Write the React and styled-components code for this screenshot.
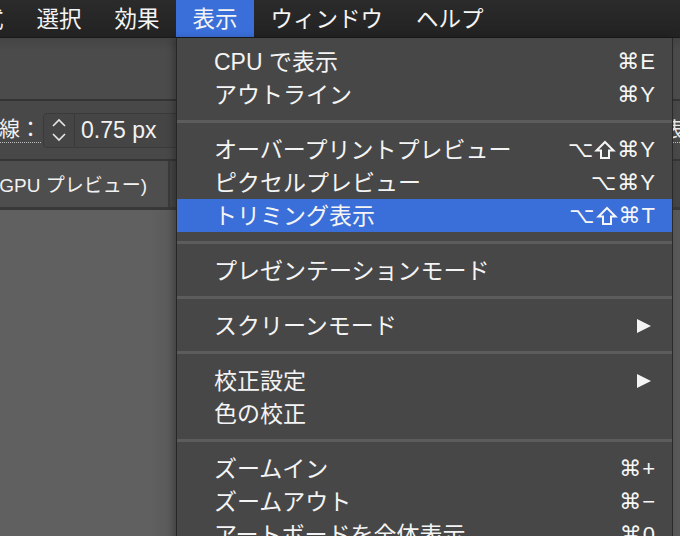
import React from "react";
import styled, { createGlobalStyle } from "styled-components";

const Global = createGlobalStyle`
  html, body {
    margin: 0;
    padding: 0;
    background: #5f5f5f;
    overflow: hidden;
  }
  body {
    font-family: "Liberation Sans", "Noto Sans CJK JP", sans-serif;
    color: #f2f2f2;
  }
`;

const Screen = styled.div`
  position: relative;
  width: 680px;
  height: 536px;
  overflow: hidden;
  display: flex;
  flex-direction: column;
`;

const MenuBar = styled.div`
  height: 38px;
  flex: none;
  display: flex;
  align-items: stretch;
  background: linear-gradient(#2b2b2b, #222222);
  border-bottom: 1px solid #1a1a1a;
  box-sizing: border-box;
  overflow: hidden;
`;

const BarItem = styled.div`
  display: flex;
  align-items: center;
  padding: 0 16.5px 3px;
  font-size: 22.5px;
  white-space: nowrap;
  color: #f4f4f4;
  background: ${(p) => (p.$active ? "#3a6ed8" : "transparent")};
  margin-left: ${(p) => p.$offset || 0}px;
`;

const Panel = styled.div`
  flex: none;
  background: #4a4a4a;
  display: flex;
  flex-direction: column;
`;

const PanelTop = styled.div`
  height: 61px;
  background: linear-gradient(#444444, #4b4b4b 20%);
  border-bottom: 2px solid #343434;
`;

const StrokeRow = styled.div`
  height: 60px;
  display: flex;
  align-items: center;
  box-sizing: border-box;
  background: #484848;
  border-bottom: 2px solid #353535;
`;

const Label = styled.span`
  font-size: 21px;
  margin-left: -1px;
  margin-right: 2px;
  padding-bottom: 1px;
  border-bottom: 1px dotted #bdbdbd;
  line-height: 24px;
`;

const Stepper = styled.div`
  width: 32px;
  height: 35px;
  display: flex;
  align-items: center;
  justify-content: center;
  background: #454545;
  border: 1px solid #3a3a3a;
  border-radius: 4px 0 0 4px;
  box-sizing: border-box;
`;

const ValueBox = styled.div`
  width: 120px;
  height: 35px;
  display: flex;
  align-items: center;
  padding-left: 6px;
  box-sizing: border-box;
  font-size: 23px;
  background: #454545;
  border: 1px solid #3a3a3a;
  border-left: none;
`;

const HiddenText = styled.span`
  margin-left: auto;
  margin-right: -26px;
  font-size: 21px;
  color: #e8e8e8;
  border-bottom: 1px dotted #bdbdbd;
  line-height: 24px;
`;

const TabRow = styled.div`
  height: 46px;
  display: flex;
  background: #444444;
  border-bottom: 3px solid #383838;
`;

const Tab = styled.div`
  width: 170px;
  display: flex;
  align-items: center;
  padding-bottom: 2px;
  box-sizing: border-box;
  font-size: 19px;
  background: #4e4e4e;
  border-right: 2px solid #3a3a3a;
  white-space: nowrap;
  overflow: hidden;
  text-indent: -7px;
`;

const Canvas = styled.div`
  flex: 1;
  background: linear-gradient(90deg, #606060 150px, #585858 176px);
`;

const Menu = styled.div`
  position: absolute;
  top: 38px;
  left: 176px;
  width: 497px;
  bottom: -40px;
  padding-top: 7px;
  box-sizing: border-box;
  background: #474747;
  border-left: 1px solid #262626;
  border-right: 1px solid #2a2a2a;
  box-shadow: -3px 0 6px rgba(0, 0, 0, 0.25);
  display: flex;
  flex-direction: column;
`;

const Row = styled.div`
  height: 33px;
  flex: none;
  display: flex;
  align-items: center;
  padding: 0 17px 0 37px;
  font-size: 23px;
  color: #f4f4f4;
  background: ${(p) => (p.$active ? "#3a6ed8" : "transparent")};
  white-space: nowrap;
`;

const Text = styled.span`
  padding-bottom: 4px;
`;

const Shortcut = styled.span`
  margin-left: auto;
  display: flex;
  align-items: center;
  gap: 1px;
  font-family: "Liberation Sans", "DejaVu Sans", sans-serif;
  font-size: 22px;
  color: #f6f6f6;
`;

const Separator = styled.div`
  height: 22px;
  flex: none;
  display: flex;
  flex-direction: column;
  justify-content: center;
  padding-bottom: 1px;
  box-sizing: border-box;
  &::after {
    content: "";
    height: 3px;
    background: #5c5c5c;
  }
`;

const Arrow = () => (
  <svg width="16" height="16" viewBox="0 0 16 16" style={{ marginLeft: "auto", marginRight: 3 }}>
    <polygon points="1,1 15,8 1,15" fill="#f4f4f4" />
  </svg>
);

const ShiftIcon = () => (
  <svg width="22" height="22" viewBox="0 0 22 22">
    <path
      d="M11 3 L19.5 11.5 H15 V19 H7 V11.5 H2.5 Z"
      fill="none"
      stroke="#f6f6f6"
      strokeWidth="2"
      strokeLinejoin="miter"
    />
  </svg>
);

const Keys = ({ value }) => (
  <Shortcut>
    {[...value].map((c, i) => (c === "⇧" ? <ShiftIcon key={i} /> : <span key={i}>{c}</span>))}
  </Shortcut>
);

const StepIcon = () => (
  <svg width="18" height="28" viewBox="0 0 18 28">
    <polyline points="3,10 9,4 15,10" fill="none" stroke="#e6e6e6" strokeWidth="1.6" />
    <polyline points="3,18 9,24 15,18" fill="none" stroke="#e6e6e6" strokeWidth="1.6" />
  </svg>
);

const items = [
  { label: "CPU で表示", key: "⌘E" },
  { label: "アウトライン", key: "⌘Y" },
  "sep",
  { label: "オーバープリントプレビュー", key: "⌥⇧⌘Y" },
  { label: "ピクセルプレビュー", key: "⌥⌘Y" },
  { label: "トリミング表示", key: "⌥⇧⌘T", active: true },
  "sep",
  { label: "プレゼンテーションモード" },
  "sep",
  { label: "スクリーンモード", sub: true },
  "sep",
  { label: "校正設定", sub: true },
  { label: "色の校正" },
  "sep",
  { label: "ズームイン", key: "⌘+" },
  { label: "ズームアウト", key: "⌘−" },
  { label: "アートボードを全体表示", key: "⌘0" },
];

export default function App() {
  return (
    <Screen>
      <Global />
      <MenuBar>
        <BarItem $offset={-58}>形式</BarItem>
        <BarItem>選択</BarItem>
        <BarItem>効果</BarItem>
        <BarItem $active>表示</BarItem>
        <BarItem>ウィンドウ</BarItem>
        <BarItem>ヘルプ</BarItem>
      </MenuBar>
      <Panel>
        <PanelTop />
        <StrokeRow>
          <Label>線：</Label>
          <Stepper>
            <StepIcon />
          </Stepper>
          <ValueBox>0.75 px</ValueBox>
          <HiddenText>非表示</HiddenText>
        </StrokeRow>
        <TabRow>
          <Tab>(GPU プレビュー)</Tab>
        </TabRow>
      </Panel>
      <Canvas />
      <Menu>
        {items.map((it, i) =>
          it === "sep" ? (
            <Separator key={i} />
          ) : (
            <Row key={i} $active={it.active}>
              <Text>{it.label}</Text>
              {it.key && <Keys value={it.key} />}
              {it.sub && <Arrow />}
            </Row>
          )
        )}
      </Menu>
    </Screen>
  );
}
